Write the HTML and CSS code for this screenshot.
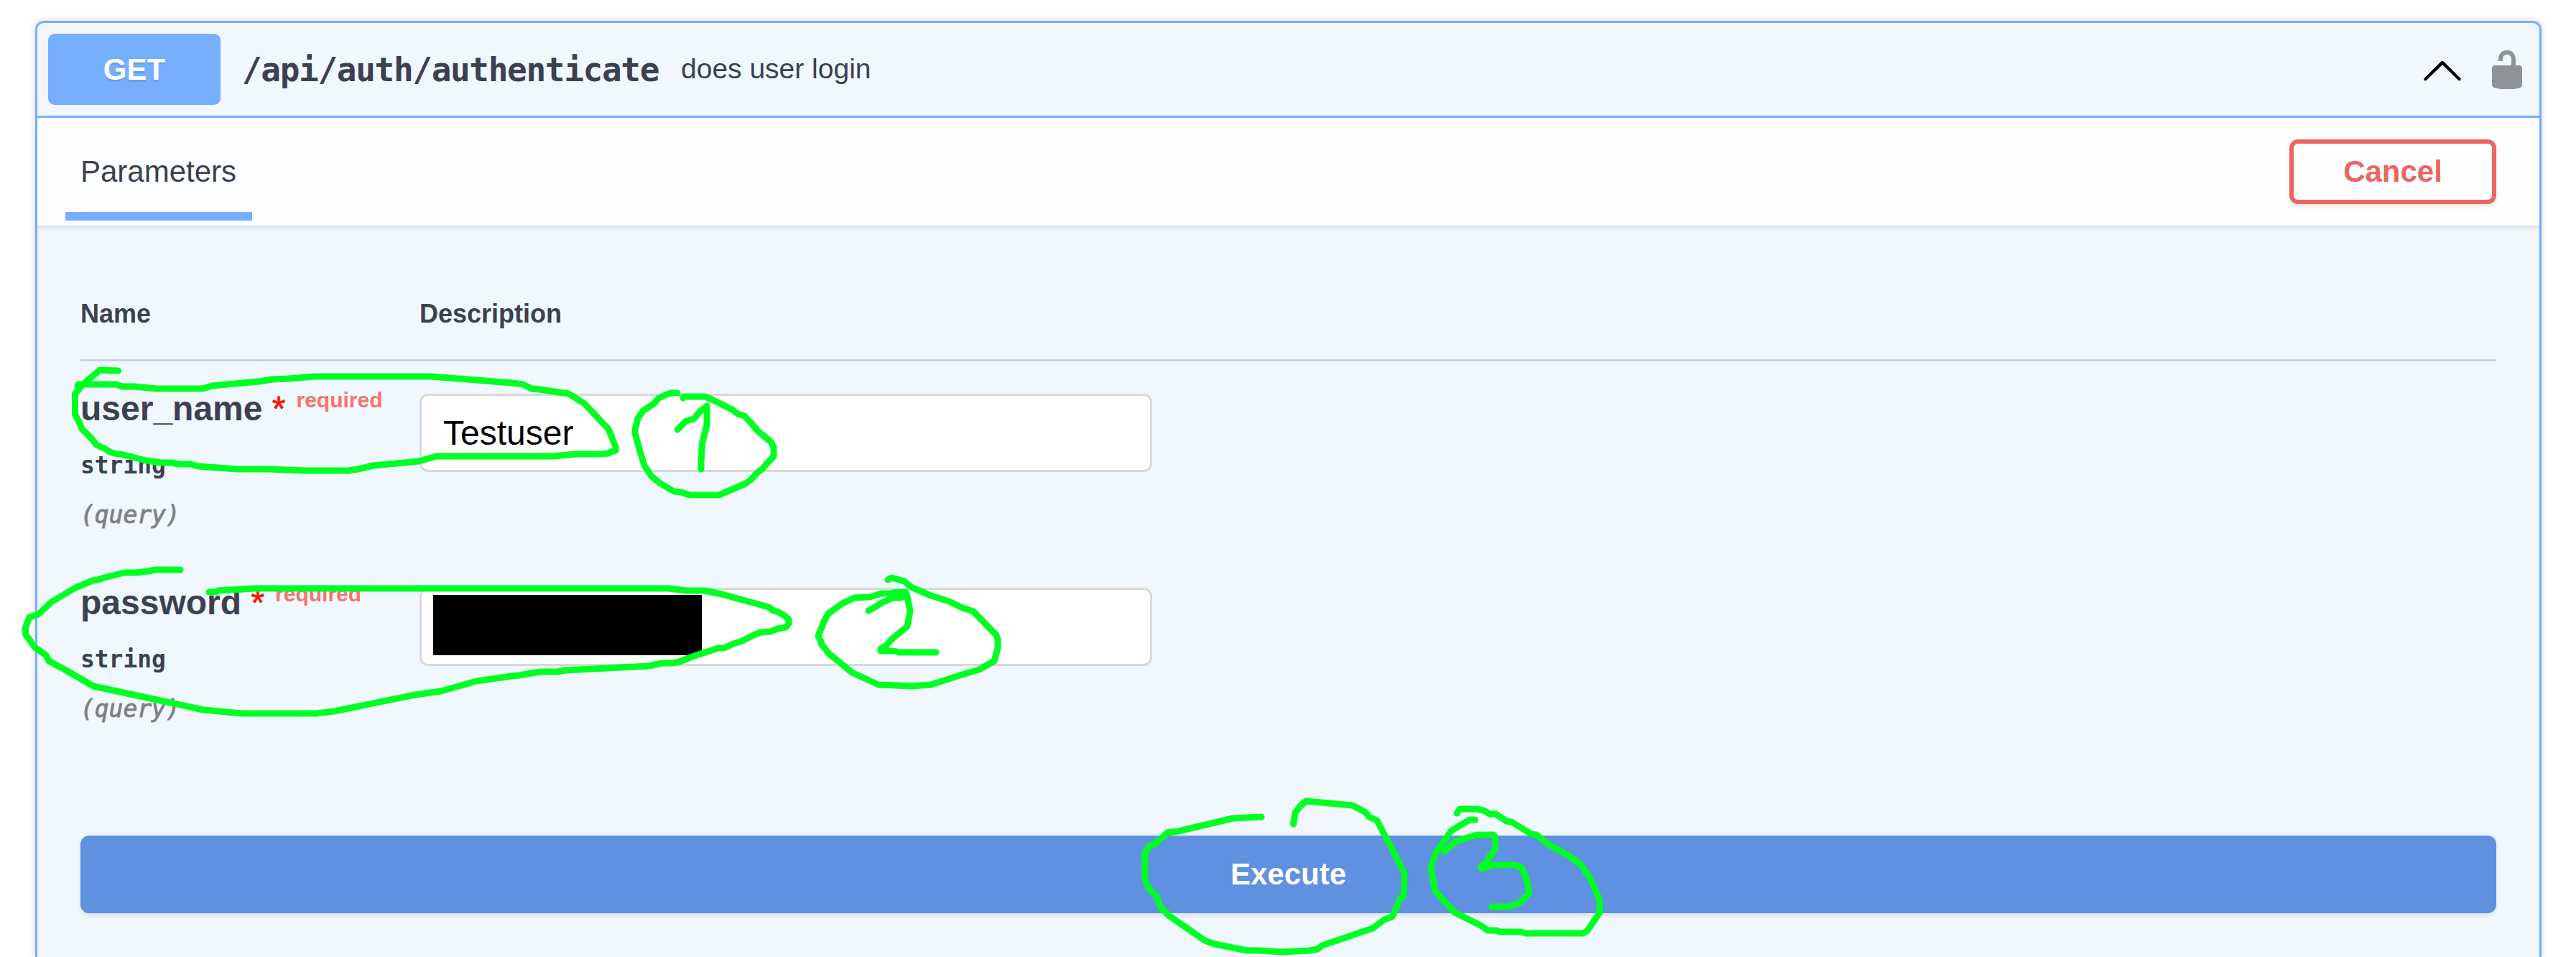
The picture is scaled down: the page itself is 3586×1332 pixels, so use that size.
FILE: index.html
```
<!DOCTYPE html>
<html lang="en">
<head>
<meta charset="utf-8">
<title>GET /api/auth/authenticate</title>
<link rel="stylesheet" href="styles.css">
</head>
<body>
<main class="opblock">
  <header class="summary">
    <span class="method">GET</span>
    <span class="path">/api/auth/authenticate</span>
    <span class="summary-text">does user login</span>
    <svg class="arrow" viewBox="0 0 20 20"><path d="M17.418 13.891c.272.268.709.268.979 0s.271-.701 0-.969l-7.908-7.83c-.27-.268-.707-.268-.979 0l-7.908 7.83c-.27.268-.27.701 0 .969.271.268.709.268.979 0L10 6.75l7.418 7.141z"/></svg>
    <svg class="lock" viewBox="0 0 20 20"><path d="M15.8 8H14V5.6C14 2.703 12.665 1 10 1 7.334 1 6 2.703 6 5.6V6h2v-.801C8 3.754 8.797 3 10 3c1.203 0 2 .754 2 2.199V8H4c-.553 0-1 .646-1 1.199V17c0 .549.428 1.139.951 1.307l1.197.387C5.672 18.861 6.55 19 7.1 19h5.8c.549 0 1.428-.139 1.951-.307l1.196-.387c.524-.167.953-.757.953-1.306V9.199C17 8.646 16.352 8 15.8 8z"/></svg>
  </header>
  <div class="section-header">
    <h4 class="tab">Parameters</h4>
    <button class="cancel">Cancel</button>
  </div>
  <section class="parameters">
    <div class="row head"><div>Name</div><div>Description</div></div>
    <div class="row param">
      <div class="info">
        <div class="name">user_name <span class="star">*</span><span class="required">required</span></div>
        <div class="type">string</div>
        <div class="in">(query)</div>
      </div>
      <div class="field"><input class="value" type="text" value="Testuser"></div>
    </div>
    <div class="row param">
      <div class="info">
        <div class="name">password <span class="star">*</span><span class="required">required</span></div>
        <div class="type">string</div>
        <div class="in">(query)</div>
      </div>
      <div class="field"><input class="value" type="text"><span class="redaction"></span></div>
    </div>
    <button class="execute">Execute</button>
  </section>
</main>
<svg class="ink" viewBox="0 0 3586 1332">
  <!-- user name loop -->
  <polyline points="164.500,516 139,515 126,526 113,537 109,543 104.500,548 104.500,577 110,587 114,597 129,612 134,619 147,625 153,629 163,632 168,632 203,641 224,644 239,644 248,646 265,646 276,649 330,653 375,653 425,655 485,655 498,653 520,648 583,642 607,635 770,635 802,632 836,632 847,631 850,629 857,627 857,622 847,597 841,591 814,562 791.500,548 751,542 740,541 728,535 713,533 600,524 438,524 402,527 379,528 360,531 295,537 282,541 218,541 187.500,538 170,538 161.500,535 109,535 108,537"/>
  <!-- step 1 -->
  <polyline points="943,547 933,547 917,554 910,562 895,572 888,582 884,598 884,603 890,625 897,648 902.500,656 906,662 918,672 938,684 948,685 960,689 1001,689 1038,673 1046,667 1054,658 1062,652 1066,647 1077,635 1077,622 1073,615 1054,599 1044,587 1036.500,579 1027,576 1019,570 989,555 981,552 952,552 951,554"/>
  <polyline points="943,598 955,586 966,583 975,572 984,565 984,592 981,603 977.500,617 976,643 976,653"/>
  <!-- password loop -->
  <polyline points="251,793 216,793 207,795 198,796 191,797 173,797 145,804 136,807 129,808 105,818 90,827 71.500,838 53.500,855 41,859 35.500,873 35.500,883 48.500,901 64,912 68,920 92,933 130,955 283,988 337,993 440,993 465,990 578,967 613.500,962 663.500,948 712,941 722.500,940 751,935 776,935 786,933 903,927 921,923 936,923 946,921 963.500,914 1000,902 1008,902 1021,896 1031,893 1049,884 1059,880 1073,879 1083,875 1094,873 1098,868 1098,862 1092,857 1084,852 1077,850 1070,845 1005,827 980,822 955,822 931,819 356,819 304,822 300,824 291,824"/>
  <!-- step 2 -->
  <polyline points="1236,807 1241,804 1259,809 1268,817 1296,829 1321,837 1340,846 1355,851 1387,884 1389,890 1389,902 1384,920 1363,932 1336,940 1296,953 1270,955 1223,953 1186,936 1153,909 1148,902 1143.500,897 1143,893 1139,885 1147.500,864 1153,854 1172.500,840 1189,832 1211,831 1227,826 1240,826 1247,824.500 1261,824.500"/>
  <polyline points="1209,850 1218,845 1227,839 1243,832 1254,832 1262.500,828 1267,850 1263,872 1242,889 1233,899 1226,903 1226,906 1244,906 1252,908 1303,908"/>
  <!-- execute loop -->
  <polyline points="1756,1137 1716,1139 1640,1157 1625,1159 1610.500,1172 1606,1176 1600,1177 1593.500,1189 1593.500,1222 1598.500,1236 1609.500,1247 1616,1263 1628,1275 1677,1309 1691,1314 1736,1323 1755,1323 1783,1325 1823,1323 1834,1321 1840.500,1316 1911,1292 1927,1280 1938,1276 1944,1263 1949,1250 1954,1247 1955,1223 1955,1215 1917,1142 1906,1137 1900,1130 1883,1121 1818,1115 1810,1122 1803,1131 1800.500,1147"/>
  <!-- step 3 -->
  <polyline points="2053.500,1141 2046,1141 2020.500,1156 1998.500,1187 1992,1208 1997.500,1240 2025,1270 2063,1289 2071,1295 2083,1295 2088,1297 2117,1297 2124,1299 2204,1299 2210,1295 2227,1270 2227,1253 2214,1223 2206.500,1212 2200.500,1203 2182,1190 2157,1176 2139,1162 2132,1161 2104,1144 2097,1143 2082.500,1133 2074,1133 2065,1128 2056,1126 2032,1126 2028,1132"/>
  <polyline points="2010.500,1185 2026.500,1171 2056,1162 2079,1162 2081.500,1165 2081.500,1182 2073,1193 2071,1199 2061,1207 2063,1209 2079,1204 2109,1204 2119,1208 2126,1227 2128.500,1243 2117,1256 2100,1262 2076.500,1262"/>
</svg>
</body>
</html>
```
FILE: styles.css
```
* { box-sizing: border-box; }
body {
  height: 1332px;
  margin: 0;
  padding: 29px 48px 0 49px;
  position: relative;
  overflow: hidden;
  background: #fff;
  color: #3c4050;
  font-family: "Liberation Sans", Arial, sans-serif;
}
button { font: bold 42px "Liberation Sans", Arial, sans-serif; }
.opblock {
  height: 1303px;
  border: 3px solid #77afff;
  border-bottom: 0;
  border-radius: 12px 12px 0 0;
  background: #f0f7ff;
  box-shadow: 0 0 9px rgba(0, 0, 0, .19);
}
.summary {
  display: flex;
  align-items: center;
  height: 132px;
  padding: 15px;
  border-bottom: 3px solid #77afff;
}
.method {
  width: 240px;
  height: 99px;
  border-radius: 9px;
  background: #77afff;
  color: #fff;
  font-size: 42px;
  font-weight: bold;
  line-height: 99px;
  text-align: center;
  text-shadow: 0 3px 0 rgba(0, 0, 0, .1);
}
.path {
  width: 581px;
  margin-left: 30px;
  font: bold 46px "DejaVu Sans Mono", monospace;
  letter-spacing: -1.33px;
  white-space: nowrap;
}
.summary-text { margin-left: 30px; padding-bottom: 1px; font-size: 39px; }
.arrow { width: 60px; height: 60px; margin: 7px 30px 0 auto; }
.lock { width: 60px; height: 60px; opacity: .4; }
.section-header {
  display: flex;
  align-items: center;
  justify-content: space-between;
  height: 150px;
  padding: 0 60px;
  background: rgba(255, 255, 255, .8);
  box-shadow: 0 3px 6px rgba(0, 0, 0, .1);
}
.tab {
  display: flex;
  align-items: center;
  align-self: flex-start;
  width: 260px;
  height: 143px;
  margin: 0 0 0 -21px;
  padding: 19px 0 0 21px;
  border-bottom: 12px solid #77afff;
  font-size: 42px;
  font-weight: normal;
}
.cancel {
  width: 288px;
  height: 90px;
  border: 6px solid #ed6560;
  border-radius: 12px;
  background: transparent;
  box-shadow: 0 3px 6px rgba(0, 0, 0, .1);
  color: #ed6560;
}
.parameters { height: 1017px; padding: 60px; }
.row { display: grid; grid-template-columns: 472px 1fr; }
.head {
  height: 129px;
  align-items: center;
  border-bottom: 3px solid #cad1dc;
  font-size: 36px;
  font-weight: bold;
}
.param { height: 270px; }
.info { padding-top: 36px; line-height: 60px; }
.name { height: 60px; font-size: 48px; font-weight: bold; white-space: nowrap; }
.star { color: #ee1c00; font-weight: normal; -webkit-text-stroke: .8px #ee1c00; }
.required {
  position: relative;
  top: -18px;
  margin-left: 15px;
  color: #f2766b;
  font-size: 30px;
}
.type { margin-top: 19px; font: bold 32.9px/60px "DejaVu Sans Mono", monospace; }
.in {
  margin-top: 9px;
  color: #808080;
  font: italic 32.9px/60px "DejaVu Sans Mono", monospace;
  -webkit-text-stroke: .9px #808080;
}
.field { position: relative; padding-top: 45px; }
.value {
  display: block;
  width: 1020px;
  height: 109px;
  padding: 0 30px;
  border: 3px solid #d9d9d9;
  border-radius: 12px;
  background: #fff;
  color: #000;
  font: 48px "Liberation Sans", Arial, sans-serif;
}
.redaction {
  position: absolute;
  left: 19px;
  top: 55px;
  width: 374px;
  height: 84px;
  background: #000;
}
.execute {
  display: block;
  width: 100%;
  height: 108px;
  margin-top: 120px;
  border: 0;
  border-radius: 12px;
  background: #5f91e0;
  box-shadow: 0 3px 6px rgba(0, 0, 0, .1);
  color: #fff;
}
.ink {
  position: absolute;
  left: 0;
  top: 0;
  width: 3586px;
  height: 1332px;
  fill: none;
  stroke: #00ff22;
  stroke-width: 9px;
  stroke-linecap: round;
  stroke-linejoin: round;
  pointer-events: none;
}
```
